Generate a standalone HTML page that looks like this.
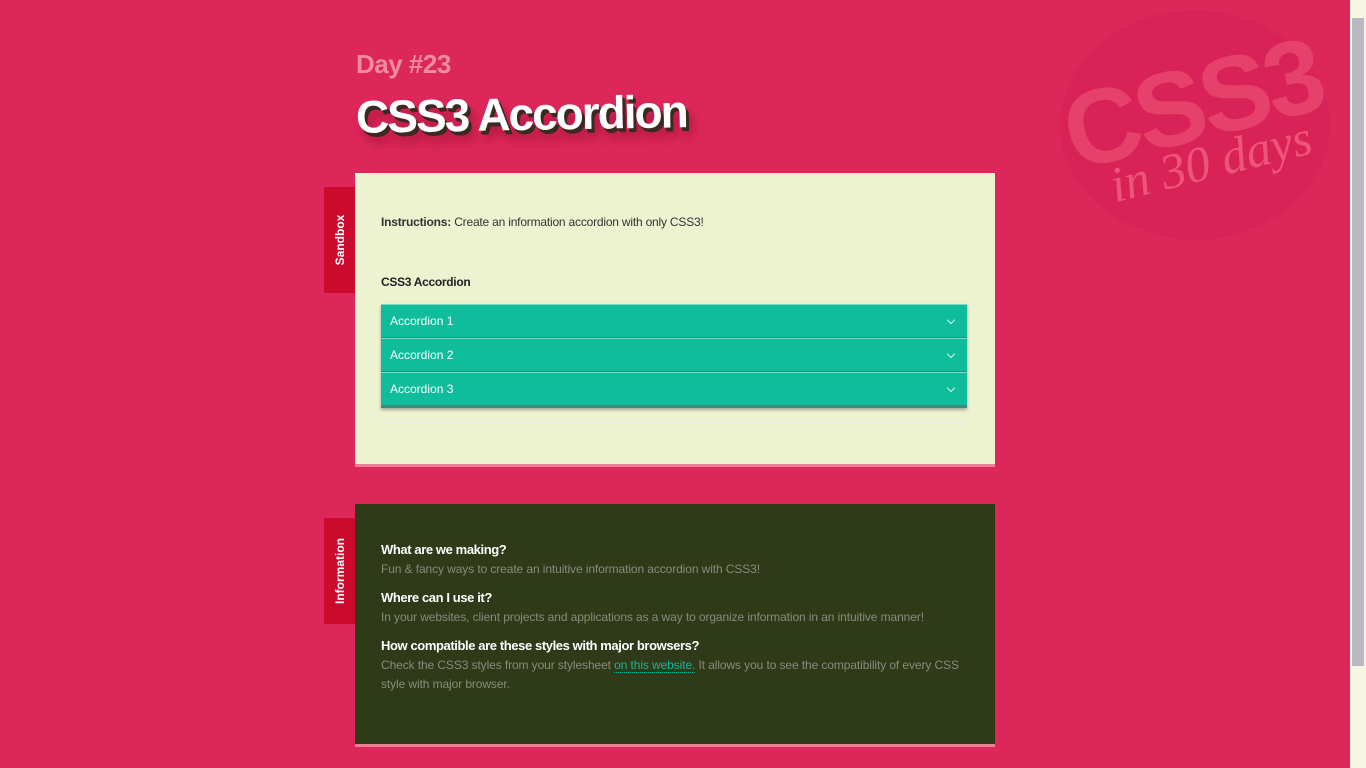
<!DOCTYPE html>
<html><head><meta charset="utf-8">
<style>
html,body{margin:0;padding:0;}
body{width:1366px;height:768px;overflow:hidden;background:#dd275b;font-family:"Liberation Sans",sans-serif;position:relative;}
.wm{position:absolute;left:1060px;top:10px;width:270px;height:230px;border-radius:50%;background:#d92358;}
.wc{position:absolute;left:1062px;top:44px;font:900 106px "Liberation Sans",sans-serif;color:#e6416a;transform:rotate(-14deg);letter-spacing:-4px;}
.wd{position:absolute;left:1108px;top:132px;font:italic 50px "Liberation Serif",serif;color:#ec5479;transform:rotate(-14deg);}
.day{position:absolute;left:356px;top:49px;font:bold 26px "Liberation Sans",sans-serif;color:#f08aa0;letter-spacing:-0.5px;}
.title{position:absolute;left:356px;top:87px;font:bold 46px "Liberation Sans",sans-serif;color:#fff;letter-spacing:-2px;text-shadow:2px 3px 0 #3a2a20,3px 4px 0 #3a2a20,6px 10px 10px rgba(120,0,30,.5);transform:rotate(-1deg);}
.panel{position:absolute;left:355px;width:640px;}
.p1{top:173px;height:291px;background:#edf2d0;box-shadow:0 3px 0 #f07e94;}
.p2{top:504px;height:240px;background:#2e3a18;box-shadow:0 3px 0 #f07e94;}
.tab{position:absolute;left:324px;width:31px;background:#cc0a2e;}
.tab span{position:absolute;left:50%;top:50%;transform:translate(-50%,-50%) rotate(-90deg);color:#fff;font:bold 12px "Liberation Sans",sans-serif;white-space:nowrap;}
.t1{top:187px;height:106px;}
.t2{top:518px;height:106px;}
.instr{position:absolute;left:381px;top:215px;font-size:12px;color:#333;letter-spacing:-0.2px;}
.h{position:absolute;left:381px;top:275px;font:bold 12px "Liberation Sans",sans-serif;color:#222;letter-spacing:-0.3px;}
.acc{position:absolute;left:381px;top:304px;width:586px;box-shadow:0 2px 3px rgba(0,0,0,.3);}
.row{height:34px;background:#0fbc9c;border-top:1px solid #7fd8c6;border-bottom:1px solid #169383;position:relative;color:#fff;font-size:12px;line-height:33px;padding-left:9px;box-sizing:border-box;}
.row:last-child{border-bottom:3px solid #3a8a84;height:36px;}
.row i{position:absolute;right:13px;top:12px;width:5px;height:5px;border-right:1.5px solid #c8f5ec;border-bottom:1.5px solid #c8f5ec;transform:rotate(45deg);}
.sep{position:absolute;left:381px;top:423px;width:586px;height:1px;background:#e4ecf0;}
.q{position:absolute;left:381px;font:bold 13px "Liberation Sans",sans-serif;color:#fff;letter-spacing:-0.4px;}
.a{position:absolute;left:381px;font-size:12px;color:#8a8a7c;line-height:19px;width:590px;letter-spacing:-0.1px;}
.a u{color:#10b89a;text-decoration:none;border-bottom:1px dotted #10b89a;}
.sb{position:absolute;left:1350px;top:0;width:16px;height:768px;background:#f6f6e2;}
.sb .th{position:absolute;left:2px;top:18px;width:12px;height:648px;background:#b8b8c0;}
</style></head><body>
<div class="wm"></div>
<div class="wc">CSS3</div><div class="wd">in 30 days</div>
<div class="day">Day #23</div>
<div class="title">CSS3 Accordion</div>

<div class="panel p1"></div>
<div class="tab t1"><span>Sandbox</span></div>
<div class="instr"><b>Instructions:</b> Create an information accordion with only CSS3!</div>
<div class="h">CSS3 Accordion</div>
<div class="acc">
<div class="row">Accordion 1<i></i></div>
<div class="row">Accordion 2<i></i></div>
<div class="row">Accordion 3<i></i></div>
</div>
<div class="sep"></div>

<div class="panel p2"></div>
<div class="tab t2"><span>Information</span></div>
<div class="q" style="top:542px">What are we making?</div>
<div class="a" style="top:560px">Fun &amp; fancy ways to create an intuitive information accordion with CSS3!</div>
<div class="q" style="top:590px">Where can I use it?</div>
<div class="a" style="top:608px">In your websites, client projects and applications as a way to organize information in an intuitive manner!</div>
<div class="q" style="top:638px">How compatible are these styles with major browsers?</div>
<div class="a" style="top:656px">Check the CSS3 styles from your stylesheet <u>on this website.</u> It allows you to see the compatibility of every CSS style with major browser.</div>

<div class="sb"><div class="th"></div></div>
</body></html>
